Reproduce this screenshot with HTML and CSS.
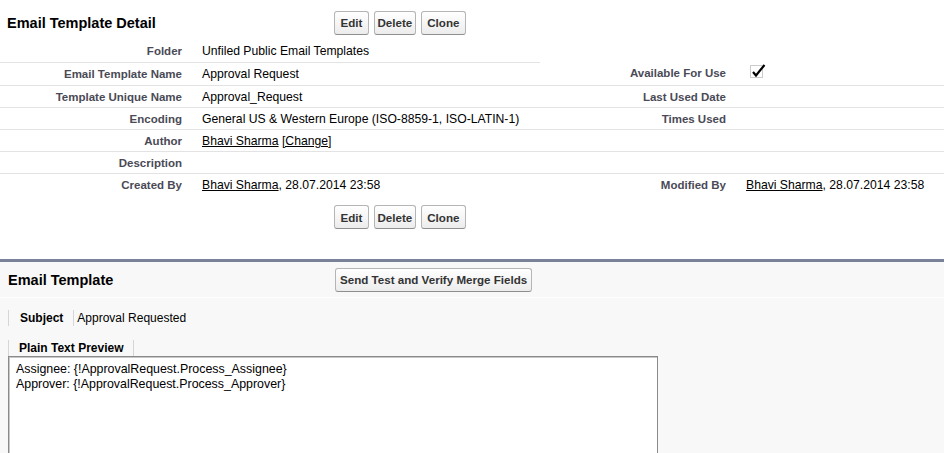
FILE: index.html
```html
<!DOCTYPE html>
<html>
<head>
<meta charset="utf-8">
<title>Email Template Detail</title>
<link rel="stylesheet" href="styles.css">
</head>
<body>
<div class="detail">
  <div class="block-head">
    <h2 class="block-title">Email Template Detail</h2>
    <div class="btns">
      <button class="btn">Edit</button>
      <button class="btn btn-tight">Delete</button>
      <button class="btn">Clone</button>
    </div>
  </div>
  <table class="fields">
    <colgroup>
      <col class="c-label1"><col class="c-data1"><col class="c-label2"><col>
    </colgroup>
    <tr>
      <td class="label">Folder</td><td class="data">Unfiled Public Email Templates</td>
      <td class="noline"></td><td class="noline"></td>
    </tr>
    <tr class="tall">
      <td class="label">Email Template Name</td><td class="data">Approval Request</td>
      <td class="label">Available For Use</td>
      <td class="data"><svg class="check" width="16" height="14" viewBox="0 0 16 14"><rect x="0.5" y="1.5" width="12" height="12" fill="none" stroke="#999" stroke-dasharray="1 1"/><path d="M3 8 L6 11.5 L14.5 1" fill="none" stroke="#000" stroke-width="2.2"/></svg></td>
    </tr>
    <tr>
      <td class="label">Template Unique Name</td><td class="data">Approval_Request</td>
      <td class="label">Last Used Date</td><td class="data"></td>
    </tr>
    <tr>
      <td class="label">Encoding</td><td class="data">General US &amp; Western Europe (ISO-8859-1, ISO-LATIN-1)</td>
      <td class="label">Times Used</td><td class="data"></td>
    </tr>
    <tr>
      <td class="label">Author</td><td class="data"><a href="#">Bhavi Sharma</a> <a href="#">[Change]</a></td>
      <td class="label"></td><td class="data"></td>
    </tr>
    <tr>
      <td class="label">Description</td><td class="data"></td>
      <td class="label"></td><td class="data"></td>
    </tr>
    <tr class="last">
      <td class="label">Created By</td><td class="data"><a href="#">Bhavi Sharma</a>, 28.07.2014 23:58</td>
      <td class="label">Modified By</td><td class="data"><a href="#">Bhavi Sharma</a>, 28.07.2014 23:58</td>
    </tr>
  </table>
  <div class="block-foot">
    <div class="btns">
      <button class="btn">Edit</button>
      <button class="btn btn-tight">Delete</button>
      <button class="btn">Clone</button>
    </div>
  </div>
</div>

<div class="template">
  <div class="block-head block-head2">
    <h2 class="block-title">Email Template</h2>
    <div class="btns btns2">
      <button class="btn btn-wide">Send Test and Verify Merge Fields</button>
    </div>
  </div>
  <div class="template-body">
    <div class="subject">
      <span class="subject-label">Subject</span>
      <span class="subject-value">Approval Requested</span>
    </div>
    <div class="tab">Plain Text Preview</div>
    <div class="preview">Assignee: {!ApprovalRequest.Process_Assignee}<br>Approver: {!ApprovalRequest.Process_Approver}</div>
  </div>
</div>
</body>
</html>
```

FILE: styles.css
```css
* { box-sizing: border-box; }
html, body { margin: 0; padding: 0; background: #fff; }
body {
  font-family: "Liberation Sans", Arial, sans-serif;
  font-size: 12px;
  color: #000;
}
a { color: #000; text-decoration: underline; }

.block-head {
  display: grid;
  grid-template-columns: 334px 1fr;
  align-items: center;
  height: 40px;
  padding-top: 5px;
}
.block-title {
  margin: 0;
  padding-left: 7px;
  font-size: 14.5px;
  font-weight: bold;
  color: #000;
}
.btns { display: flex; gap: 5px; }
.btn {
  font-family: "Liberation Sans", Arial, sans-serif;
  font-size: 11.6px;
  font-weight: bold;
  color: #333;
  height: 24px;
  line-height: 13px;
  padding: 0 5.5px;
  border: 1px solid #b5b5b5;
  border-bottom-color: #8f8f8f;
  border-radius: 3px;
  background: linear-gradient(#ffffff, #ececec);
  cursor: pointer;
}
.btn-tight { padding: 0 2.5px; }

.fields {
  width: 100%;
  border-collapse: collapse;
  table-layout: fixed;
}
.c-label1 { width: 192px; }
.c-data1 { width: 348px; }
.c-label2 { width: 196px; }
.fields td {
  height: 22px;
  padding: 5px 10px 3px 10px;
  line-height: 13px;
  font-size: 12.2px;
  border-bottom: 1px solid #e3e3e3;
  vertical-align: top;
  white-space: nowrap;
}
.fields tr.tall td { height: 23px; }
.fields td.noline { border-bottom: none; }
.fields tr.last td { border-bottom: none; }
.fields td.label {
  text-align: right;
  font-size: 11.5px;
  font-weight: bold;
  color: #4a4a56;
}
.fields td.data { padding-left: 10px; }
.check { display: block; margin-top: -3px; margin-left: 4px; }

.block-foot {
  display: grid;
  grid-template-columns: 334px 1fr;
  padding-top: 10px;
  height: 64px;
}
.block-foot .btns { grid-column: 2; }

.template {
  border-top: 3px solid #7a8299;
  background: #f8f8f8;
  min-height: 200px;
}
.block-head2 {
  height: 36px;
  padding-top: 0;
  grid-template-columns: 335px 1fr;
  border-bottom: 1px solid #fff;
}
.block-head2 .block-title { padding-left: 8px; }
.btn-wide { padding: 0 4px; }

.template-body { padding: 12px 0 0 8px; }
.subject {
  display: flex;
  height: 16px;
  line-height: 16px;
}
.subject-label {
  border-left: 1px solid #d6d6d6;
  padding: 0 10px 0 11px;
  font-weight: bold;
}
.subject-value {
  border-left: 1px solid #d6d6d6;
  padding-left: 3px;
}
.tab {
  display: inline-block;
  margin-top: 14px;
  height: 16px;
  line-height: 16px;
  padding: 0 9px 0 10px;
  border-left: 1px solid #d6d6d6;
  border-right: 1px solid #d6d6d6;
  font-weight: bold;
}
.preview {
  width: 650px;
  height: 120px;
  background: #fff;
  border: 1px solid #8a8a8a;
  box-shadow: inset 1px 1px 0 #c8c8c8;
  padding: 5px 7px;
  line-height: 15px;
  font-size: 12.4px;
}
```
